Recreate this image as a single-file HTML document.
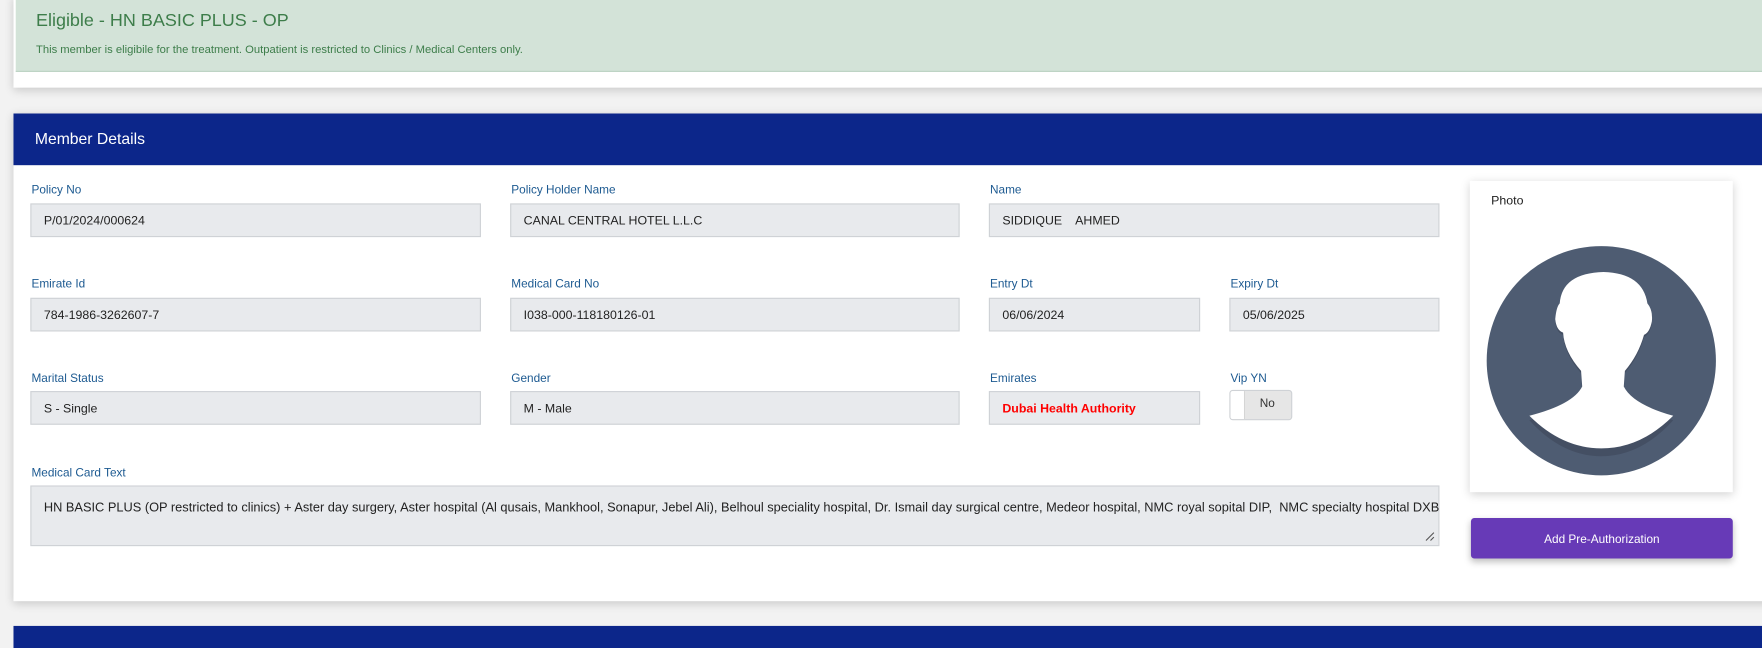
<!DOCTYPE html>
<html><head><meta charset="utf-8"><style>
html,body{margin:0;padding:0;width:1762px;height:640px;overflow:hidden;background:#f2f2f2;}
#w{position:absolute;left:0;top:0;width:1568px;height:570px;transform:scale(1.12372);transform-origin:0 0;font-family:"Liberation Sans",Arial,sans-serif;}
.a{position:absolute;}
.card{background:#fff;box-shadow:0 2px 8px rgba(0,0,0,.18);}
.lbl{position:absolute;font-size:10.5px;color:#1d5a91;}
.inp{position:absolute;background:#e8eaed;border:1px solid #cfd2d6;box-sizing:border-box;height:30px;font-size:11px;color:#222;padding-left:11px;line-height:30px;}
</style></head><body><div id="w">
<div class="a card" style="left:12px;top:-4px;width:1570px;height:82px;"></div>
<div class="a" style="left:14px;top:0;width:1560px;height:63px;background:#d3e3d8;border-bottom:1px solid #bcd3c3;"></div>
<div class="a" style="left:32px;top:10px;font-size:16px;color:#3d7d4a;">Eligible - HN BASIC PLUS - OP</div>
<div class="a" style="left:32px;top:39px;font-size:10px;color:#3d7d4a;">This member is eligibile for the treatment. Outpatient is restricted to Clinics / Medical Centers only.</div>

<div class="a card" style="left:12px;top:101px;width:1570px;height:434px;"></div>
<div class="a" style="left:12px;top:101px;width:1570px;height:46px;background:#0c268a;"></div>
<div class="a" style="left:31px;top:115px;font-size:14px;color:#fff;">Member Details</div>

<div class="lbl" style="left:28px;top:163px;">Policy No</div>
<div class="inp" style="left:27px;top:181px;width:401px;">P/01/2024/000624</div>
<div class="lbl" style="left:455px;top:163px;">Policy Holder Name</div>
<div class="inp" style="left:454px;top:181px;width:400px;">CANAL CENTRAL HOTEL L.L.C</div>
<div class="lbl" style="left:881px;top:163px;">Name</div>
<div class="inp" style="left:880px;top:181px;width:401px;">SIDDIQUE &nbsp;&nbsp; AHMED</div>

<div class="lbl" style="left:28px;top:247px;">Emirate Id</div>
<div class="inp" style="left:27px;top:265px;width:401px;">784-1986-3262607-7</div>
<div class="lbl" style="left:455px;top:247px;">Medical Card No</div>
<div class="inp" style="left:454px;top:265px;width:400px;">I038-000-118180126-01</div>
<div class="lbl" style="left:881px;top:247px;">Entry Dt</div>
<div class="inp" style="left:880px;top:265px;width:188px;">06/06/2024</div>
<div class="lbl" style="left:1095px;top:247px;">Expiry Dt</div>
<div class="inp" style="left:1094px;top:265px;width:187px;">05/06/2025</div>

<div class="lbl" style="left:28px;top:331px;">Marital Status</div>
<div class="inp" style="left:27px;top:348px;width:401px;">S - Single</div>
<div class="lbl" style="left:455px;top:331px;">Gender</div>
<div class="inp" style="left:454px;top:348px;width:400px;">M - Male</div>
<div class="lbl" style="left:881px;top:331px;">Emirates</div>
<div class="inp" style="left:880px;top:348px;width:188px;color:#f00;font-weight:bold;">Dubai Health Authority</div>
<div class="lbl" style="left:1095px;top:331px;">Vip YN</div>
<div class="a" style="left:1094px;top:347px;width:56px;height:27px;box-sizing:border-box;border:1px solid #cfd2d6;border-radius:3px;background:#e6e6e6;overflow:hidden;">
 <div class="a" style="left:0;top:0;width:12px;height:25px;background:#fff;border-right:1px solid #d5d5d5;"></div>
 <div class="a" style="left:26px;top:5px;font-size:10.5px;color:#333;">No</div>
</div>

<div class="lbl" style="left:28px;top:415px;">Medical Card Text</div>
<div class="inp" style="left:27px;top:432px;width:1254px;height:54px;line-height:14px;padding-top:12px;font-size:11.4px;white-space:nowrap;">HN BASIC PLUS (OP restricted to clinics) + Aster day surgery, Aster hospital (Al qusais, Mankhool, Sonapur, Jebel Ali), Belhoul speciality hospital, Dr. Ismail day surgical centre, Medeor hospital, NMC royal sopital DIP, &nbsp;NMC specialty hospital DXB
<svg class="a" style="right:3px;bottom:3px;" width="9" height="9"><path d="M1 8L8 1M5 8L8 5" stroke="#555" stroke-width="1"/></svg></div>

<div class="a card" style="left:1308px;top:161px;width:234px;height:277px;"></div>
<div class="a" style="left:1327px;top:173px;font-size:11px;color:#222;">Photo</div>
<svg class="a" style="left:0;top:0;" width="1568" height="570">
 <circle cx="1425" cy="321" r="102" fill="#4e5c72"/>
 <path d="M1361 374 Q1400 363 1408 346 L1407 332 Q1392 315 1391 298 Q1385 296 1384 286 Q1385 275 1388 272 Q1390 246 1427 244 Q1462 246 1466 272 Q1471 278 1470 288 Q1468 298 1463 300 Q1458 318 1446 332 L1445 346 Q1453 363 1489 374 Q1460 406 1425 406 Q1390 406 1361 374Z" fill="#444f63"/>
 <path d="M1361 370 Q1400 360 1408 344 L1407 330 Q1392 313 1391 296 Q1385 294 1384 284 Q1385 273 1388 270 Q1390 243 1427 242 Q1462 243 1466 270 Q1471 276 1470 286 Q1468 296 1463 298 Q1458 316 1446 330 L1445 344 Q1453 360 1489 370 Q1460 399 1425 399 Q1390 399 1361 370Z" fill="#fff"/>
</svg>
<div class="a" style="left:1309px;top:461px;width:233px;height:36px;background:#673ab7;border-radius:3px;box-shadow:0 3px 6px rgba(0,0,0,.25);color:#fff;font-size:10.5px;text-align:center;line-height:38px;">Add Pre-Authorization</div>

<div class="a" style="left:12px;top:557px;width:1570px;height:20px;background:#0c268a;"></div>
</div></body></html>
